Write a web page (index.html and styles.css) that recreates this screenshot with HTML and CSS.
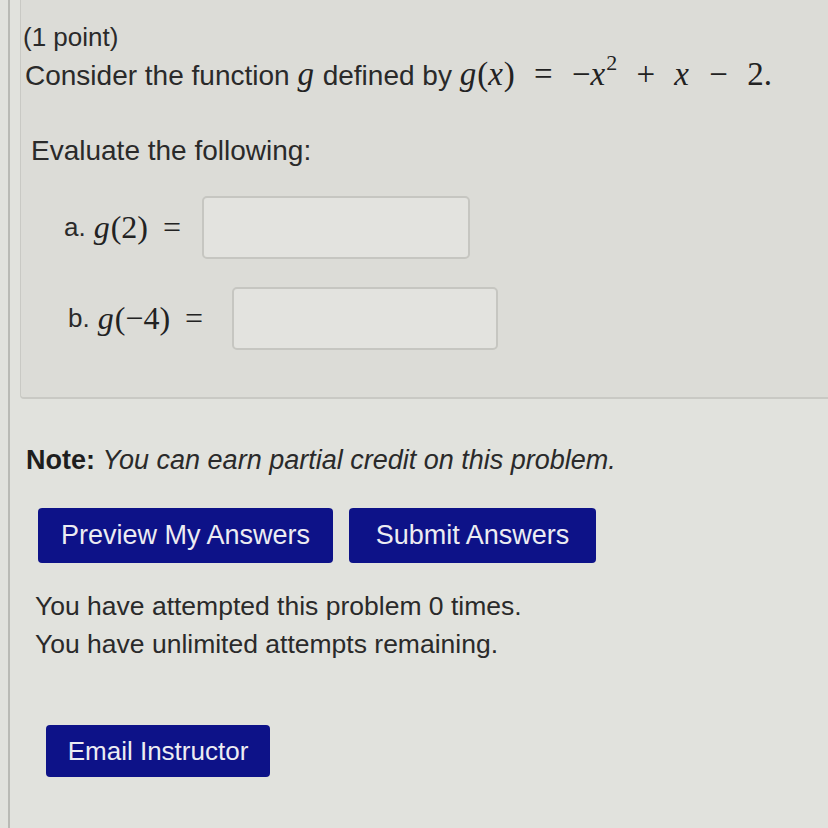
FILE: index.html
```html
<!DOCTYPE html>
<html lang="en">
<head>
  <meta charset="UTF-8" />
  <meta name="viewport" content="width=device-width, initial-scale=1.0"/>
  <title>Problem 1</title>
  <link rel="stylesheet" href="styles.css">
</head>
<body>

  <div class="page">
    <div class="well">
      <div class="points">(1 point)</div>
      <p class="statement">
        Consider the function <span class="math"><i>g</i></span> defined by
        <span class="math"><i>g</i>(<i>x</i>) <span class="op">=</span> &minus;<i>x</i><sup>2</sup> <span class="op">+</span> <i>x</i> <span class="op">&minus;</span> 2.</span>
      </p>
      <p class="prompt">Evaluate the following:</p>

      <div class="answer answer-a">
        <span class="label">a.</span>
        <span class="math"><i>g</i>(2) <span class="op">=</span></span>
        <input type="text" class="field">
      </div>
      <div class="answer answer-b">
        <span class="label">b.</span>
        <span class="math"><i>g</i>(&minus;4) <span class="op">=</span></span>
        <input type="text" class="field">
      </div>
    </div>

    <p class="note"><b>Note:</b> <i>You can earn partial credit on this problem.</i></p>

    <div class="actions">
      <button class="btn">Preview My Answers</button>
      <button class="btn">Submit Answers</button>
    </div>

    <p class="attempts">
      You have attempted this problem 0 times.<br>
      You have unlimited attempts remaining.
    </p>

    <button class="btn email">Email Instructor</button>
  </div>

</body>
</html>
```

FILE: styles.css
```css
body {
  margin: 0;
  background: #e1e2dd;
  color: #2a2a2a;
  font-family: 'Liberation Sans', Arial, sans-serif;
  overflow: hidden;
}

.page {
  margin-left: 8px;
  border-left: 2px solid #b9bab5;
  min-height: 100vh;
}

.well {
  margin-left: 10px;
  padding: 21px 0 47px 2px;
  background: #dcdcd7;
  border-left: 1px solid #c9c9c4;
  border-bottom: 2px solid #c9c9c4;
  border-bottom-left-radius: 4px;
}

.points {
  font-size: 26px;
  line-height: 32px;
}

.statement {
  margin: 2px 0 0 2px;
  font-size: 28px;
  line-height: 38px;
}

.math {
  font-family: 'Liberation Serif', 'Times New Roman', serif;
  font-size: 33px;
  color: #222;
}

.math i {
  padding-right: 1px;
}

.math sup {
  font-size: 22px;
  vertical-align: 15px;
  line-height: 0;
}

.op {
  padding: 0 11px;
}

.prompt {
  margin: 38px 0 0 8px;
  font-size: 28px;
  line-height: 36px;
}

.answer {
  display: flex;
  align-items: center;
  gap: 8px;
  font-size: 26px;
}

.answer-a {
  margin-top: 27px;
  padding-left: 41px;
}

.answer-b {
  margin-top: 28px;
  padding-left: 45px;
}

.answer .math {
  font-size: 32px;
}

.answer .op {
  padding: 0 7px;
}

.field {
  height: 63px;
  box-sizing: border-box;
  margin-left: 6px;
  background: #e3e3df;
  border: 2px solid #c6c6c1;
  border-radius: 5px;
}

.answer-a .field {
  width: 268px;
}

.answer-b .field {
  width: 266px;
  margin-left: 14px;
}

.note {
  margin: 45px 0 0 16px;
  font-size: 27px;
  line-height: 32px;
}

.note b {
  color: #1e1e1e;
}

.actions {
  display: flex;
  gap: 16px;
  margin: 32px 0 0 28px;
}

.btn {
  height: 55px;
  padding: 0 20px;
  background: #0d1288;
  color: #ececf2;
  border: none;
  border-radius: 4px;
  font-family: 'Liberation Sans', Arial, sans-serif;
  font-size: 27px;
}

.actions .btn:first-child {
  width: 295px;
}

.actions .btn:last-child {
  width: 247px;
}

.attempts {
  margin: 24px 0 0 25px;
  font-size: 26.5px;
  line-height: 38px;
}

.email {
  display: block;
  width: 224px;
  height: 52px;
  margin: 62px 0 0 36px;
  font-size: 26px;
}
```
